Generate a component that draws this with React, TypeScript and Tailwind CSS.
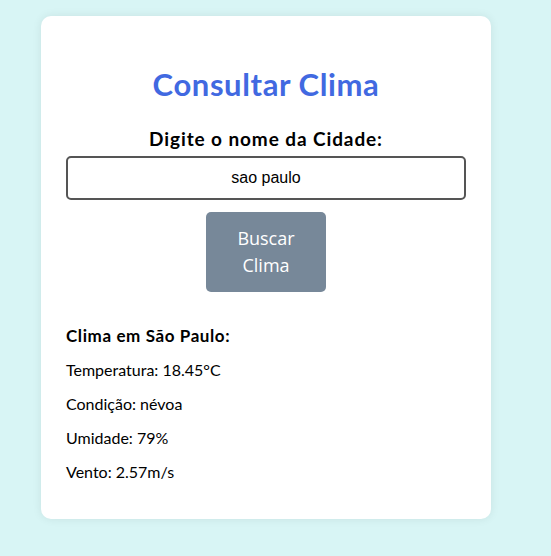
import { useState } from "react";

export default function App() {
  const [city, setCity] = useState("sao paulo");

  return (
    <div className="min-h-[556px] bg-[#d8f5f5] pt-[16px] pl-[41px]" style={{ fontFamily: '"Gill Sans", Lato, sans-serif' }}>
      <div className="w-[450px] rounded-[10px] bg-white px-[25px] pt-[50px] pb-[37px] shadow-[0_0_10px_rgba(0,0,0,0.08)]">
        <h1 className="text-center text-[31px] font-bold leading-[36px] tracking-[0.6px] text-[#4169e1]">Consultar Clima</h1>
        <div className="mt-[24px] text-center text-[19px] font-bold leading-[26px] tracking-[0.9px] text-black">Digite o nome da Cidade:</div>
        <input
          className="mt-[4px] h-[44px] w-full rounded-[5px] border-2 border-[#555] text-center text-[16px] text-black outline-none"
          style={{ fontFamily: '"Liberation Sans", Arial, sans-serif' }}
          value={city}
          onChange={(e: any) => setCity(e.target.value)}
        />
        <div className="mt-[12px] flex justify-center">
          <button className="h-[80px] w-[120px] rounded-[5px] bg-[#778899] text-[18px] leading-[27px] text-white" style={{ fontFamily: '"Open Sans", sans-serif' }}>
            Buscar
            <br />
            Clima
          </button>
        </div>
        <div className="mt-[34px] text-[16px] text-black">
          <p className="text-[17px] font-bold leading-[20px] tracking-[0.6px]">Clima em São Paulo:</p>
          <p className="mt-[14px] leading-[20px]">Temperatura: 18.45°C</p>
          <p className="mt-[14px] leading-[20px]">Condição: névoa</p>
          <p className="mt-[14px] leading-[20px]">Umidade: 79%</p>
          <p className="mt-[14px] leading-[20px]">Vento: 2.57m/s</p>
        </div>
      </div>
    </div>
  );
}
